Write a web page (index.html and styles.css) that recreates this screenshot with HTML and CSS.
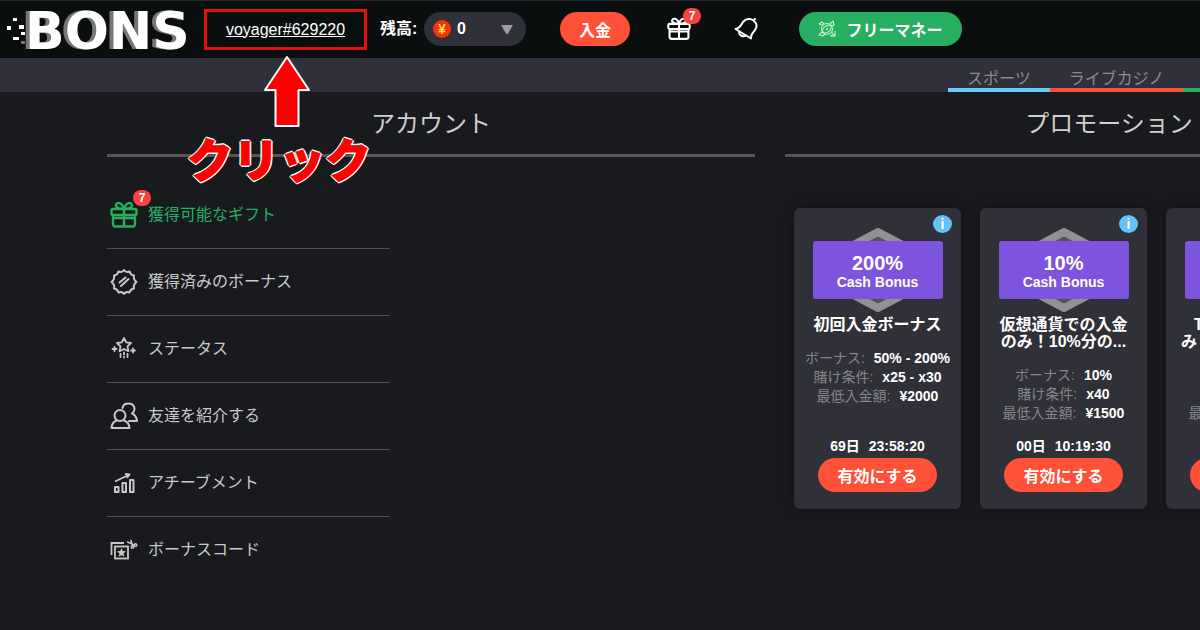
FILE: index.html
```html
<!DOCTYPE html>
<html lang="ja">
  <head>
    <meta charset="UTF-8" />
    <meta name="viewport" content="width=device-width, initial-scale=1.0" />
    <title>BONS</title>
    <link rel="stylesheet" href="styles.css">
  </head>
  <body>
    <!-- shared icons -->
    <svg class="sprite" aria-hidden="true">
      <symbol id="gift" viewBox="0 0 28 28">
        <g fill="none" stroke="currentColor" stroke-width="2.4" stroke-linejoin="round" stroke-linecap="round">
          <rect x="1.500" y="8" width="25" height="6" rx="1.500" />
          <path d="M3 14v9q0 2.500 2.500 2.500h17q2.500 0 2.500-2.500v-9M14 8v17.500M3 17h22" />
          <path d="M14 8C10 8 5.500 7 6 4S12 .5 14 8C16 .5 21.500 1 22 4S18 8 14 8" />
        </g>
      </symbol>
      <symbol id="hexagon" viewBox="0 0 76 84">
        <path d="M38 4 72 22v40L38 80 4 62V22z" fill="#515158" stroke="#919194" stroke-width="8" stroke-linejoin="round" />
      </symbol>
    </svg>

    <header class="header">
      <a class="logo" href="#">
        <svg class="logo-dots" viewBox="0 0 18 34" aria-hidden="true">
          <g fill="#fff">
            <rect x="6" y="6" width="4" height="3" />
            <rect x="0" y="14" width="4" height="4" />
            <rect x="12" y="13" width="5" height="4" />
            <rect x="6" y="25" width="6" height="3" />
            <rect x="14" y="20" width="4" height="3" />
          </g>
          <rect x="14" y="29" width="4" height="3" fill="#777" />
        </svg>
        <span class="logo-text">BONS</span>
      </a>

      <div class="user">
        <a class="user-link" href="#">voyager#629220</a>
        <!-- click hint -->
        <svg class="hint-arrow" viewBox="0 0 48 74" aria-hidden="true">
          <path d="M24 2 46 35H35.500V71H12.500V35H2z" fill="#f00" stroke="#fff" stroke-width="2" stroke-linejoin="round" />
        </svg>
        <span class="hint-text">クリック</span>
      </div>

      <span class="balance-label" id="balance">残高:</span>
      <button class="balance" type="button" aria-labelledby="balance">
        <span class="coin">¥</span>
        <span>0</span>
        <svg class="caret" viewBox="0 0 12 9" aria-hidden="true"><path d="M1 0h10q1 0 .5 1L7 8.500Q6 9.500 5 8.500L.5 1Q0 0 1 0z" fill="#9b9ba0" /></svg>
      </button>
      <button class="btn btn-deposit" type="button">入金</button>

      <a class="header-icon header-gift" href="#" aria-label="ギフト">
        <svg viewBox="0 0 28 28"><use href="#gift" /></svg>
        <span class="count">7</span>
      </a>
      <a class="header-icon header-bell" href="#" aria-label="通知">
        <svg viewBox="0 0 24 24">
          <g fill="none" stroke="currentColor" stroke-width="2" stroke-linejoin="round" stroke-linecap="round">
            <path d="M1.500 12C6 11.500 7 8 9 5c3-3.500 7.500-4 10.500-1.500s4 6 1.500 9.500c-2 3-4.500 4-4 8.500z" />
            <path d="M5 14.500c0 4 4 6 7 4M20 3l1-1" />
          </g>
        </svg>
      </a>

      <button class="btn btn-free" type="button">
        <svg viewBox="0 0 18 18" aria-hidden="true">
          <g fill="none" stroke="#c9f0d6" stroke-width="1.100" stroke-linejoin="round">
            <circle cx="9" cy="9" r="5.500" />
            <ellipse cx="9" cy="9" rx="5" ry="3" transform="rotate(-40 9 9)" />
            <path d="M4.500 5L1 4l3-2 2 2M12 4l3-3 1 4-2 1M4 12l-3 3 4 1 2-2M13.500 12l3.500 4-4-1M17 11v5h-5" />
            <path d="M8 10l2-2" />
          </g>
        </svg>
        フリーマネー
      </button>
    </header>

    <nav class="tabs">
      <a class="tab tab-sports" href="#">スポーツ</a>
      <a class="tab tab-live" href="#">ライブカジノ</a>
      <a class="tab tab-slots" href="#">スロット</a>
    </nav>

    <main class="content">
      <section>
        <h2>アカウント</h2>
        <ul class="menu">
          <li>
            <a class="menu-item active" href="#">
              <span class="menu-icon">
                <svg viewBox="0 0 28 28"><use href="#gift" /></svg>
                <span class="count">7</span>
              </span>
              獲得可能なギフト
            </a>
          </li>
          <li>
            <a class="menu-item" href="#">
              <span class="menu-icon">
                <svg viewBox="0 0 28 28">
                  <g fill="none" stroke="currentColor" stroke-width="2" stroke-linejoin="round" stroke-linecap="round">
                    <path d="M14 2q2 3 5.500 1.500Q20.500 7 24 7.500 23 11.500 26.500 14 23 16.500 24 20.500 20.500 21 19.500 24.500 16 23 14 26q-2-3-5.500-1.500Q7.500 21 4 20.500 5 16.500 1.500 14 5 11.500 4 7.500 7.500 7 8.500 3.500 12 5 14 2z" />
                    <path d="M9.500 14.500l6-5M11 18l7.500-7" />
                  </g>
                </svg>
              </span>
              獲得済みのボーナス
            </a>
          </li>
          <li>
            <a class="menu-item" href="#">
              <span class="menu-icon">
                <svg viewBox="0 0 28 28">
                  <g fill="none" stroke="currentColor" stroke-width="1.800" stroke-linejoin="round" stroke-linecap="round">
                    <path d="M14 3l2.200 4.300 4.800.7-3.500 3.400.9 4.800L14 14l-4.400 2.200.9-4.800L7 8l4.800-.7z" />
                    <path d="M4.500 12v4M2.500 14h4M23 13.500v4M21 15.500h4M10.500 19v3M14 17.500v2M14 22v.5M17.500 19v3" />
                  </g>
                </svg>
              </span>
              ステータス
            </a>
          </li>
          <li>
            <a class="menu-item" href="#">
              <span class="menu-icon">
                <svg viewBox="0 0 28 28">
                  <g fill="none" stroke="currentColor" stroke-width="2" stroke-linejoin="round" stroke-linecap="round">
                    <circle cx="10" cy="13.500" r="5.500" />
                    <path d="M6.500 18.500Q2 20 1.500 26h18q-.5-6-5.500-7.500" />
                    <path d="M12.500 6C13 3 15.500 1.500 18.500 1.500c6 0 8 6.500 3.500 10q4.500 2 5 7.500h-8" />
                  </g>
                </svg>
              </span>
              友達を紹介する
            </a>
          </li>
          <li>
            <a class="menu-item" href="#">
              <span class="menu-icon">
                <svg viewBox="0 0 28 28">
                  <g fill="none" stroke="currentColor" stroke-width="2" stroke-linejoin="round">
                    <rect x="5" y="18" width="3.500" height="5" />
                    <rect x="12.500" y="14" width="3.500" height="9" />
                    <rect x="20" y="11" width="3.500" height="12" />
                    <path d="M5 12.500L18.500 6M15 5l4.500.5L17 9" stroke-width="1.800" />
                  </g>
                </svg>
              </span>
              アチーブメント
            </a>
          </li>
          <li>
            <a class="menu-item" href="#">
              <span class="menu-icon">
                <svg viewBox="0 0 28 28">
                  <g fill="none" stroke="currentColor" stroke-width="1.800">
                    <path d="M1.500 19V7H14" />
                    <rect x="5" y="10.500" width="13" height="12" />
                  </g>
                  <path d="M11.500 12l1.300 3 3.200.2-2.500 2.200.8 3.300-2.800-1.800-2.800 1.800.8-3.300L7 15.200l3.200-.2z" fill="currentColor" />
                  <g fill="none" stroke="currentColor" stroke-width="1.500" stroke-linecap="round">
                    <path d="M17.500 6l7 3M21 4.500l1.500 5" />
                    <circle cx="25.500" cy="9" r="1.300" />
                    <circle cx="22.500" cy="11" r="1.300" />
                  </g>
                </svg>
              </span>
              ボーナスコード
            </a>
          </li>
        </ul>
      </section>

      <section>
        <h2>プロモーション</h2>
        <div class="cards">
          <article class="card">
            <button class="info" type="button">i</button>
            <div class="prize">
              <svg class="hexagon" viewBox="0 0 76 84" aria-hidden="true"><use href="#hexagon" /></svg>
              <p class="prize-box"><strong>200%</strong>Cash Bonus</p>
            </div>
            <h3>初回入金ボーナス</h3>
            <dl>
              <div><dt>ボーナス:</dt><dd>50% - 200%</dd></div>
              <div><dt>賭け条件:</dt><dd>x25 - x30</dd></div>
              <div><dt>最低入金額:</dt><dd>¥2000</dd></div>
            </dl>
            <p class="timer"><span>69日</span><span>23:58:20</span></p>
            <button class="btn btn-activate" type="button">有効にする</button>
          </article>

          <article class="card">
            <button class="info" type="button">i</button>
            <div class="prize">
              <svg class="hexagon" viewBox="0 0 76 84" aria-hidden="true"><use href="#hexagon" /></svg>
              <p class="prize-box"><strong>10%</strong>Cash Bonus</p>
            </div>
            <h3>仮想通貨での入金<br>のみ！10%分の...</h3>
            <dl>
              <div><dt>ボーナス:</dt><dd>10%</dd></div>
              <div><dt>賭け条件:</dt><dd>x40</dd></div>
              <div><dt>最低入金額:</dt><dd>¥1500</dd></div>
            </dl>
            <p class="timer"><span>00日</span><span>10:19:30</span></p>
            <button class="btn btn-activate" type="button">有効にする</button>
          </article>

          <article class="card">
            <button class="info" type="button">i</button>
            <div class="prize">
              <svg class="hexagon" viewBox="0 0 76 84" aria-hidden="true"><use href="#hexagon" /></svg>
              <p class="prize-box"><strong>10%</strong>Cash Bonus</p>
            </div>
            <h3>Tetherでの入金<br>み！10%分のボー..</h3>
            <dl>
              <div><dt>ボーナス:</dt><dd>10%</dd></div>
              <div><dt>賭け条件:</dt><dd>x40</dd></div>
              <div><dt>最低入金額:</dt><dd>¥1500</dd></div>
            </dl>
            <p class="timer"><span>00日</span><span>10:19:30</span></p>
            <button class="btn btn-activate" type="button">有効にする</button>
          </article>
        </div>
      </section>
    </main>
  </body>
</html>
```

FILE: styles.css
```css
* {
  box-sizing: border-box;
}
body {
  margin: 0;
  min-height: 100vh;
  overflow-x: hidden;
  background-color: #191a1e;
  color: #fff;
  font-family: "Liberation Sans", "Noto Sans CJK JP", sans-serif;
  font-size: 16px;
  line-height: 20px;
}
a {
  color: inherit;
  text-decoration: none;
}
button {
  border: 0;
  padding: 0;
  color: #fff;
  font-family: inherit;
  cursor: pointer;
}
h2, h3, p, ul, dl, dd {
  margin: 0;
  padding: 0;
}
ul {
  list-style: none;
}
svg {
  display: block;
}
.sprite {
  display: none;
}

/* Header */
.header {
  display: flex;
  align-items: center;
  height: 58px;
  padding-left: 7px;
  background-color: #0b0e0f;
  box-shadow: inset 0 1px #222729;
  white-space: nowrap;
}
.logo {
  display: flex;
  align-items: center;
  width: 183px;
}
.logo-dots {
  width: 18px;
  height: 34px;
}
.logo-text {
  padding-top: 3px;
  font-family: "DejaVu Sans", sans-serif;
  font-size: 52px;
  font-weight: bold;
  line-height: 50px;
  text-shadow: -2px 0 #777, -4px 0 #777;
}
.user {
  position: relative;
  width: 163px;
  margin-left: 14px;
  border: 3px solid #e0120c;
  line-height: 35px;
  text-align: center;
}
.user-link {
  text-decoration: underline;
}
.hint-arrow {
  position: absolute;
  top: 43px;
  left: 56px;
  width: 48px;
  height: 74px;
  z-index: 1;
}
.hint-text {
  position: absolute;
  top: 117px;
  left: -20px;
  z-index: 1;
  color: #f00;
  font-family: "Noto Sans CJK JP", sans-serif;
  font-size: 46px;
  font-weight: 900;
  line-height: 56px;
  -webkit-text-stroke: 1px #f00;
  text-shadow: 2px 0 #fff, -2px 0 #fff, 0 2px #fff, 0 -2px #fff,
    1px 1px #fff, -1px 1px #fff, 1px -1px #fff, -1px -1px #fff;
}
.balance-label {
  width: 44px;
  margin-left: 13px;
  font-weight: bold;
}
.balance {
  display: flex;
  align-items: center;
  width: 102px;
  height: 34px;
  padding: 0 13px 0 9px;
  border-radius: 17px;
  background-color: #2f3039;
  font-size: 16px;
  font-weight: bold;
}
.coin {
  width: 18px;
  height: 18px;
  margin-right: 6px;
  border-radius: 50%;
  background-color: #f5330f;
  color: #ffd84a;
  font-size: 14px;
  line-height: 18px;
}
.caret {
  width: 12px;
  height: 9px;
  margin-left: auto;
}
.btn {
  height: 34px;
  border-radius: 17px;
  background-color: #ff5038;
  font-size: 16px;
  font-weight: bold;
}
.btn-deposit {
  width: 70px;
  margin-left: 34px;
}
.btn-activate {
  width: 119px;
}
.header-icon {
  position: relative;
}
.header-icon svg {
  width: 24px;
  height: 24px;
}
.header-gift {
  margin-left: 37px;
}
.header-bell {
  margin-left: 43px;
}
.count {
  position: absolute;
  top: -9px;
  right: -10px;
  width: 18px;
  height: 16px;
  border-radius: 9px;
  background-color: #fb4343;
  color: #fff;
  font-size: 12px;
  font-weight: bold;
  line-height: 16px;
  text-align: center;
}
.btn-free {
  display: flex;
  align-items: center;
  justify-content: center;
  gap: 10px;
  width: 163px;
  margin-left: 41px;
  background-color: #27ae60;
}
.btn-free svg {
  width: 18px;
  height: 18px;
}

/* Category tabs */
.tabs {
  display: flex;
  height: 34px;
  padding-left: 79vw;
  overflow: hidden;
  background-color: #2f3039;
  color: #8b8b91;
  white-space: nowrap;
}
.tab {
  flex: none;
  padding: 12px 19px 0;
  border-bottom: 4px solid;
  line-height: 18px;
}
.tab-sports {
  border-color: #6cc9fa;
}
.tab-live {
  border-color: #ff5038;
}
.tab-slots {
  border-color: #27ae60;
}

/* Content columns */
.content {
  display: grid;
  grid-template-columns: 54vw 54vw;
  gap: 30px;
  padding-left: 107px;
}
h2 {
  padding-top: 2px;
  border-bottom: 3px solid #55565a;
  color: #cfcfcf;
  font-size: 24px;
  font-weight: normal;
  line-height: 60px;
  text-align: center;
}
.menu {
  width: 283px;
  margin-top: 25px;
}
.menu li {
  border-bottom: 1px solid #505154;
}
.menu li:last-child {
  border-bottom: 0;
}
.menu-item {
  display: flex;
  align-items: center;
  gap: 10px;
  height: 66px;
  padding-left: 3px;
  color: #c8c8c9;
}
.menu-item.active {
  color: #27ae60;
}
.menu-icon {
  position: relative;
}
.menu-icon svg {
  width: 28px;
  height: 28px;
}
.menu-icon .count {
  top: -11px;
  right: -13px;
}

/* Promotion cards */
.cards {
  display: flex;
  gap: 19px;
  margin: 51px 0 0 9px;
}
.card {
  position: relative;
  display: flex;
  flex: none;
  flex-direction: column;
  align-items: center;
  width: 167px;
  min-height: 301px;
  padding: 20px 0 17px;
  border-radius: 6px;
  background-color: #2f3038;
  box-shadow: 0 0 12px rgba(0, 0, 0, 0.3);
  white-space: nowrap;
}
.info {
  position: absolute;
  top: 7px;
  right: 9px;
  width: 19px;
  height: 18px;
  border-radius: 50%;
  background-color: #63c3f7;
  font-size: 14px;
  font-weight: bold;
  line-height: 18px;
}
.prize {
  display: grid;
  place-items: center;
}
.prize > * {
  grid-area: 1 / 1;
}
.hexagon {
  width: 76px;
  height: 84px;
}
.prize-box {
  z-index: 1;
  width: 130px;
  padding: 12px 0 8px;
  border-radius: 3px;
  background-color: #7d54de;
  font-size: 14px;
  font-weight: bold;
  line-height: 18px;
  text-align: center;
}
.prize-box strong {
  display: block;
  font-size: 20px;
  line-height: 20px;
}
h3 {
  margin-top: 4px;
  font-size: 16px;
  line-height: 17px;
  text-align: center;
}
dl {
  margin-top: 16px;
  font-size: 14px;
  line-height: 19px;
}
dl div {
  display: flex;
  justify-content: center;
  gap: 9px;
}
dt {
  color: #85868b;
}
dd {
  font-weight: bold;
}
.timer {
  display: flex;
  gap: 9px;
  margin-top: auto;
  font-size: 14px;
  font-weight: bold;
  line-height: 24px;
}
```
